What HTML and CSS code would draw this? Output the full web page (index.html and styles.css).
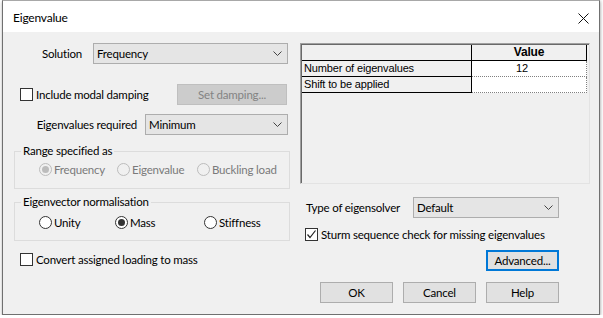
FILE: index.html
```html
<!DOCTYPE html>
<html>
<head>
<meta charset="utf-8">
<title>Eigenvalue</title>
<link rel="stylesheet" href="styles.css">
</head>
<body>
<div class="window">
  <div class="titlebar">
    <span class="title">Eigenvalue</span>
    <svg class="close" width="11" height="11" viewBox="0 0 11 11"><path d="M0.5 0.5L10.5 10.5M10.5 0.5L0.5 10.5" stroke="#111" stroke-width="1"/></svg>
  </div>
  <div class="content">
    <div class="left">
      <div class="row row-solution">
        <span class="label">Solution</span>
        <div class="combo combo-solution"><span>Frequency</span><svg class="chev" width="9" height="5" viewBox="0 0 9 5"><path d="M0.5 0.5L4.5 4.5L8.5 0.5" fill="none" stroke="#444"/></svg></div>
      </div>
      <div class="row row-damping">
        <label class="check"><span class="box"></span>Include modal damping</label>
        <button class="btn btn-disabled btn-damping">Set damping...</button>
      </div>
      <div class="row row-required">
        <span class="label">Eigenvalues required</span>
        <div class="combo combo-required"><span>Minimum</span><svg class="chev" width="9" height="5" viewBox="0 0 9 5"><path d="M0.5 0.5L4.5 4.5L8.5 0.5" fill="none" stroke="#444"/></svg></div>
      </div>
      <fieldset class="group group-range">
        <legend>Range specified as</legend>
        <div class="radios">
          <span class="radio disabled checked r-freq"><span class="circle"></span>Frequency</span>
          <span class="radio disabled r-eig"><span class="circle"></span>Eigenvalue</span>
          <span class="radio disabled"><span class="circle"></span>Buckling load</span>
        </div>
      </fieldset>
      <fieldset class="group group-norm">
        <legend>Eigenvector normalisation</legend>
        <div class="radios">
          <span class="radio r-unity"><span class="circle"></span>Unity</span>
          <span class="radio checked r-mass"><span class="circle"></span>Mass</span>
          <span class="radio"><span class="circle"></span>Stiffness</span>
        </div>
      </fieldset>
      <label class="check check-convert"><span class="box"></span>Convert assigned loading to mass</label>
    </div>
    <div class="right">
      <div class="table">
        <div class="grid">
          <div class="cell head"></div>
          <div class="cell head head-value">Value</div>
          <div class="cell name">Number of eigenvalues</div>
          <div class="cell val">12</div>
          <div class="cell name">Shift to be applied</div>
          <div class="cell val"></div>
        </div>
      </div>
      <div class="row row-solver">
        <span class="label">Type of eigensolver</span>
        <div class="combo combo-solver"><span>Default</span><svg class="chev" width="9" height="5" viewBox="0 0 9 5"><path d="M0.5 0.5L4.5 4.5L8.5 0.5" fill="none" stroke="#444"/></svg></div>
      </div>
      <label class="check check-sturm"><span class="box checked"><svg width="11" height="11" viewBox="0 0 11 11"><path d="M1.5 5.5L4 8.5L9.5 1.5" fill="none" stroke="#222" stroke-width="1.2"/></svg></span>Sturm sequence check for missing eigenvalues</label>
      <div class="row row-advanced">
        <button class="btn btn-default">Advanced...</button>
      </div>
      <div class="row row-buttons">
        <button class="btn">OK</button>
        <button class="btn">Cancel</button>
        <button class="btn">Help</button>
      </div>
    </div>
  </div>
</div>
</body>
</html>
```
FILE: styles.css
```css
* { box-sizing: border-box; }
html, body { margin: 0; padding: 0; background: #ffffff; }
body {
  font-family: Lato, "Liberation Sans", sans-serif;
  font-size: 11.5px;
  letter-spacing: -0.2px;
  color: #000;
}
.window {
  margin-left: 2px;
  width: 598px;
  height: 315px;
  border: 1px solid #707070;
  border-top-color: #a8a8a8;
  background: #f0f0f0;
  box-shadow: 0 2px 3px rgba(0,0,0,0.25), 1px 0 3px rgba(0,0,0,0.15);
  display: flex;
  flex-direction: column;
}
.titlebar {
  height: 31px;
  background: #fff;
  display: flex;
  align-items: center;
  justify-content: space-between;
  padding: 0 10px 0 10px;
  flex: none;
}
.title { font-size: 12px; padding-top: 1px; }
.close { margin-top: 4px; }
.content {
  display: flex;
  padding: 0 8px 0 11px;
  gap: 10px;
}
.left { width: 276px; display: flex; flex-direction: column; }
.right { width: 290px; display: flex; flex-direction: column; }
.row { display: flex; align-items: center; height: 21px; }
.combo {
  height: 21px;
  background: #e5e5e5;
  border: 1px solid #adadad;
  display: flex;
  align-items: center;
  justify-content: space-between;
  padding: 0 5px 0 3px;
}
.row-solution { margin-top: 11px; justify-content: flex-end; padding-right: 2px; }
.row-solution .label { margin-right: 11px; }
.combo-solution { width: 195px; }
.row-damping { margin-top: 20px; justify-content: space-between; padding-left: 6px; padding-right: 3px; }
.check { display: flex; align-items: center; }
.box {
  width: 13px; height: 13px;
  border: 1px solid #333;
  background: #fff;
  margin-right: 3px;
  display: flex; align-items: center; justify-content: center;
  flex: none;
}
.btn {
  font: inherit;
  letter-spacing: inherit;
  height: 21px;
  width: 73px;
  background: #e1e1e1;
  border: 1px solid #adadad;
  color: #000;
  padding: 0;
}
.btn-disabled { background: #cccccc; border-color: #bfbfbf; color: #838383; }
.btn-damping { width: 110px; }
.btn-default { border: 2px solid #0078d7; }
.row-required { margin-top: 9px; justify-content: flex-end; padding-right: 2px; }
.row-required .label { margin-right: 8px; }
.combo-required { width: 143px; }
.group {
  margin: 0;
  border: 1px solid #dcdcdc;
  padding: 0 0 0 24px;
  min-width: 0;
}
.group legend {
  padding: 0 2px;
  margin-left: -18px;
  line-height: 14px;
}
.group-range { margin-top: 9px; padding-top: 5px; padding-bottom: 12px; }
.group-norm { margin-top: 6px; padding-top: 7px; padding-bottom: 11px; }
.radios { display: flex; height: 13px; align-items: center; }
.radio { display: flex; align-items: center; }
.circle {
  width: 13px; height: 13px; border-radius: 50%;
  border: 1px solid #333; background: #fff;
  margin-right: 2px; flex: none;
  display: flex; align-items: center; justify-content: center;
}
.radio.checked .circle::after {
  content: ""; width: 7px; height: 7px; border-radius: 50%; background: #333;
}
.radio.disabled { color: #7a7a7a; }
.radio.disabled .circle { border-color: #bcbcbc; background: #f0f0f0; }
.radio.disabled.checked .circle::after { background: #bcbcbc; }
.r-freq { width: 78px; }
.r-eig { width: 80px; }
.r-unity { width: 76px; }
.r-mass { width: 89px; }
.check-convert { margin-top: 12px; padding-left: 6px; }
.table {
  margin-top: 11px;
  height: 141px;
  border-top: 1px solid #a0a0a0;
  border-left: 1px solid #a0a0a0;
  border-right: 1px solid #e3e3e3;
  border-bottom: 1px solid #e3e3e3;
  box-shadow: inset 1px 1px 0 #696969;
  padding: 1px 0 0 1px;
}
.grid {
  display: grid;
  grid-template-columns: 170px 115px;
  grid-auto-rows: 16px;
  font-family: "Liberation Sans", Arial, sans-serif;
  font-size: 11px;
  letter-spacing: -0.15px;
}
.cell { border-right: 1px solid #000; border-bottom: 1px solid #000; line-height: 15px; white-space: nowrap; overflow: hidden; }
.head { background: #f0f0f0; }
.head-value { font-weight: bold; text-align: center; font-size: 12px; }
.name { background: #f0f0f0; padding-left: 2px; }
.val { background: #fff; border-right: 1px dotted #808080; border-bottom: 1px dotted #808080; padding-left: 44px; }
.row-solver { margin-top: 13px; padding-left: 6px; padding-right: 31px; justify-content: space-between; }
.combo-solver { width: 146px; }
.check-sturm { margin-top: 10px; padding-left: 5px; height: 13px; }
.row-advanced { margin-top: 9px; justify-content: flex-end; padding-right: 31px; }
.row-buttons { margin-top: 11px; justify-content: flex-end; padding-right: 31px; gap: 10px; }
```
